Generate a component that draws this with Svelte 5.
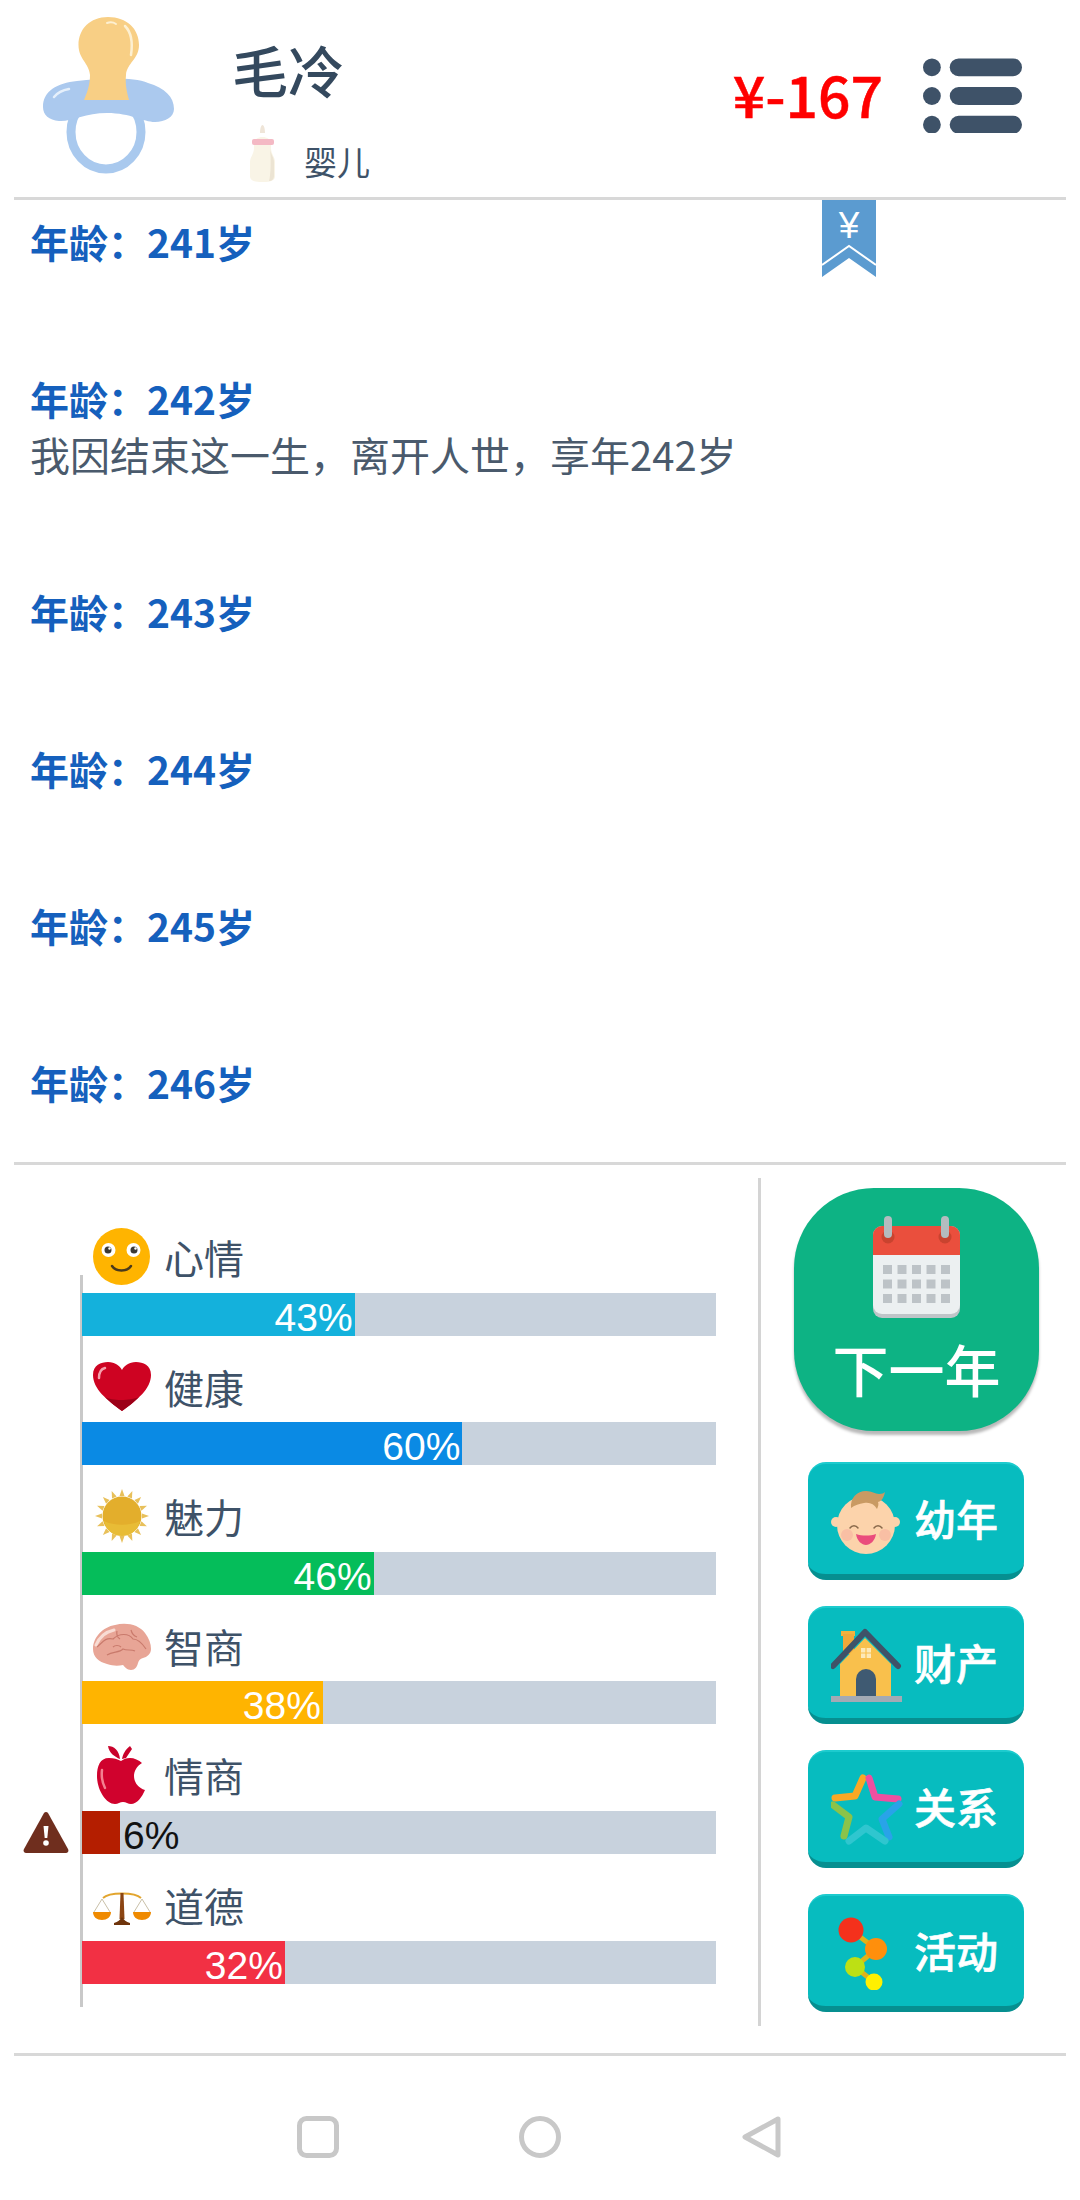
<script>
	// full-width punctuation used by the log lines
	const colon = '\uFF1A';
	const comma = '\uFF0C';

	const logs = [
		{ age: 241 },
		{ age: 242, text: `我因结束这一生${comma}离开人世${comma}享年242岁` },
		{ age: 243 },
		{ age: 244 },
		{ age: 245 },
		{ age: 246 }
	];

	const stats = [
		{ name: '心情', icon: 'face', value: 43, color: '#14b1dc' },
		{ name: '健康', icon: 'heart', value: 60, color: '#0a8ae4' },
		{ name: '魅力', icon: 'sun', value: 46, color: '#05bd5a' },
		{ name: '智商', icon: 'brain', value: 38, color: '#ffb400' },
		{ name: '情商', icon: 'apple', value: 6, color: '#b41e00' },
		{ name: '道德', icon: 'scale', value: 32, color: '#f23044' }
	];

	const actions = [
		{ name: '幼年', icon: 'baby' },
		{ name: '财产', icon: 'house' },
		{ name: '关系', icon: 'star' },
		{ name: '活动', icon: 'dots' }
	];

	const sunRays = Array.from({ length: 16 }, (_, i) => i * 22.5);
	const calendarCols = [0, 1, 2, 3, 4];
	const calendarRows = [0, 1, 2];
</script>

<div class="page">
	<header class="top">
		<svg class="pacifier" viewBox="0 0 131 157" aria-hidden="true">
			<ellipse cx="63" cy="115" rx="35" ry="37" fill="none" stroke="#a9c9ee" stroke-width="9" />
			<path d="M0 90C0 74 14 66 34 64 60 61 90 60 105 66 122 71 131 80 131 92 131 100 122 105 112 105 100 105 88 96 64 96 42 96 28 105 16 104 6 103 0 98 0 90z" fill="#abc9ee" />
			<path d="M11 80c4-5 9-7 15-8" fill="none" stroke="#e6f0fb" stroke-width="2.500" stroke-linecap="round" />
			<path d="M65 0C47 0 35.500 12 35.500 28 35.500 42 46 46 47 58 47 68 44 76 41 83L86 83C84 75 82 68 83 58 84 46 96 42 96 28 96 12 84 0 65 0z" fill="#f8cf85" />
			<path d="M82 9c6 6 8 16 6 29" fill="none" stroke="#fdf0d2" stroke-width="2.500" stroke-linecap="round" />
			<path d="M64 6c3-1 6-1 9 1" fill="none" stroke="#fdf0d2" stroke-width="2" stroke-linecap="round" />
		</svg>
		<div class="who">
			<div class="name">毛冷</div>
			<div class="stage">
				<svg class="bottle" viewBox="0 0 25 57" aria-hidden="true">
					<path d="M10 8c0-4 1-8 2.500-8s2.500 4 2.500 8z" fill="#efe5d8" />
					<path d="M4 20c0-6 4-8 8.500-8s8.500 2 8.500 8v3c0 6 4 9 4 14v14c0 4-3 6-12.500 6S0 55 0 51V37c0-5 4-8 4-14z" fill="#f9f4e6" />
					<rect x="2" y="14" width="22" height="6" rx="2" fill="#f4b9c4" />
					<path d="M20 24c1 6 4 8 4 13v14c0 3-2 5-5 5 2-6 2-24 1-32z" fill="#ece4d3" />
				</svg>
				<span>婴儿</span>
			</div>
		</div>
		<div class="money">¥-167</div>
		<svg class="menu" viewBox="0 0 100 75" aria-hidden="true">
			<circle cx="9" cy="9" r="9" />
			<circle cx="9" cy="38" r="9" />
			<circle cx="9" cy="67" r="9" />
			<rect x="27" y="0" width="73" height="18" rx="9" />
			<rect x="27" y="29" width="73" height="18" rx="9" />
			<rect x="27" y="58" width="73" height="18" rx="9" />
		</svg>
	</header>

	<section class="log">
		<svg class="ribbon" viewBox="0 0 54 77" aria-hidden="true">
			<path d="M0 0h54v77L27 58 0 77z" fill="#5b9bd0" />
			<path d="M0 65l27-19 27 19" fill="none" stroke="#fff" stroke-width="2" />
			<text x="27" y="38" text-anchor="middle">¥</text>
		</svg>
		{#each logs as entry}
			<div class="entry">
				<div class="age">年龄{colon}{entry.age}岁</div>
				{#if entry.text}
					<div class="event">{entry.text}</div>
				{/if}
			</div>
		{/each}
	</section>

	<section class="panel">
		<div class="stats">
			{#each stats as stat}
				<div class="stat">
					<div class="label">
						<svg class="stat-icon" viewBox="0 0 58 58" aria-hidden="true">
							{#if stat.icon === 'face'}
								<circle cx="28.500" cy="28.500" r="28.500" fill="#ffb400" />
								<circle cx="15.500" cy="22" r="7" fill="#fff" />
								<circle cx="40.500" cy="22" r="7" fill="#fff" />
								<circle cx="15" cy="22" r="3.500" fill="#3c3a36" />
								<circle cx="41" cy="22" r="3.500" fill="#3c3a36" />
								<circle cx="16.500" cy="20.500" r="1.200" fill="#fff" />
								<circle cx="42.500" cy="20.500" r="1.200" fill="#fff" />
								<path d="M19 38c4 6 15 6 19 0" fill="none" stroke="#4a3a1c" stroke-width="2.500" stroke-linecap="round" />
							{:else if stat.icon === 'heart'}
								<path d="M29 53C14 42 0 31 0 17 0 7 8 4 15 4c7 0 12 4 14 8 2-4 7-8 14-8 7 0 15 3 15 13 0 14-14 25-29 36z" fill="#ce0322" />
								<path d="M29 53c-6-4-12-9-17-14 6 4 26 4 34 0-5 5-11 10-17 14z" fill="#9c0018" />
								<path d="M6 20c0-5 2-9 6-10" fill="none" stroke="#f5a0ac" stroke-width="2.500" stroke-linecap="round" />
							{:else if stat.icon === 'sun'}
								{#each sunRays as angle}
									<path d="M26.500 9L29 2l2.500 7z" fill="#e8c05a" transform="rotate({angle} 29 29)" />
								{/each}
								<circle cx="29" cy="29" r="19.500" fill="#e3ae2c" />
								<path d="M11 34c2 9 9 15 18 15s16-6 18-15c-10 5-26 5-36 0z" fill="#e8bc36" />
							{:else if stat.icon === 'brain'}
								<path d="M0 32C0 20 10 10 22 8c12-3 24 0 30 8 4 5 6 11 6 16 0 5-4 8-8 9-3 1-4 2-5 5-1 4-3 7-7 7-4 0-6-3-8-5-5 1-10 1-16-1C6 45 0 40 0 32z" fill="#e8a596" />
								<path d="M4 30c5-4 8-10 16-8 6-6 16-6 20 0 5 0 9 4 13 10M14 38c6-4 12-2 16-6 4 2 8 0 12 2M24 14c-1 4 0 6 3 8M38 13c1 4 3 6 6 7M20 30c2-2 6-2 8 0" fill="none" stroke="#c97a6c" stroke-width="1.200" />
								<path d="M3 28c3-7 9-13 18-15" fill="none" stroke="#f8dcd4" stroke-width="3" stroke-linecap="round" />
							{:else if stat.icon === 'apple'}
								<path d="M28 15c-4-2-7-3-12-3C7 12 4 20 4 30c0 14 9 28 18 28 3 0 5-2 8-2s5 2 8 2c6 0 11-7 14-14-7-2-11-8-11-14 0-5 3-10 8-13-3-3-8-5-12-5-4 0-6 1-9 3z" fill="#d0022d" />
								<path d="M27 13C22 11 16 7 15 0c6 0 11 4 12 13zM29 13c1-5 3-9 8-13l2 3-6 9z" fill="#c9022b" />
								<path d="M9 24c-1 8 1 14 3 18" fill="none" stroke="#f37f90" stroke-width="2.500" stroke-linecap="round" />
							{:else}
								<path d="M10 22C16 16 42 16 48 22" fill="none" stroke="#e2a52e" stroke-width="1.800" />
								<path d="M27.500 17h3l1 26h-5z" fill="#8b4513" />
								<path d="M29 41c2 3 4 5 8 6v2H21v-2c4-1 6-3 8-6z" fill="#6e340c" />
								<path d="M9 23L1 36M9 23l8 13M49 23l-8 13M49 23l8 13" fill="none" stroke="#c9c0a8" stroke-width="1" />
								<path d="M0 36h18c0 5-4 8-9 8s-9-3-9-8zM40 36h18c0 5-4 8-9 8s-9-3-9-8z" fill="#ef8a00" />
							{/if}
						</svg>
						<span>{stat.name}</span>
					</div>
					<div class="bar">
						{#if stat.value < 10}
							<svg class="warn" viewBox="0 0 46 42" aria-hidden="true">
								<path d="M21 2a2.500 2.500 0 0 1 4 0L45 38c1 2 0 4-2 4H3c-2 0-3-2-2-4z" fill="#6f2e1e" />
								<path d="M20.500 15h5l-1.200 12h-2.600z" fill="#fff" />
								<circle cx="23" cy="32" r="2.800" fill="#fff" />
							</svg>
						{/if}
						<div class="fill" style="width: {stat.value}%; background: {stat.color}">
							{#if stat.value >= 10}<span>{stat.value}%</span>{/if}
						</div>
						{#if stat.value < 10}<span class="low">{stat.value}%</span>{/if}
					</div>
				</div>
			{/each}
		</div>

		<div class="actions">
			<div class="next">
				<svg class="calendar" viewBox="0 0 87 102" aria-hidden="true">
					<rect x="0" y="10" width="87" height="92" rx="9" fill="#bfc5c8" />
					<path d="M0 39h87v50a9 9 0 0 1-9 9H9a9 9 0 0 1-9-9z" fill="#ecf0f1" />
					<path d="M9 10h69a9 9 0 0 1 9 9v20H0V19a9 9 0 0 1 9-9z" fill="#ea4f3d" />
					<circle cx="15" cy="21" r="6.500" fill="#c9432f" />
					<circle cx="72" cy="21" r="6.500" fill="#c9432f" />
					<rect x="11" y="0" width="8" height="22" rx="4" fill="#b4bcbf" />
					<rect x="68" y="0" width="8" height="22" rx="4" fill="#b4bcbf" />
					{#each calendarRows as row}
						{#each calendarCols as col}
							<rect x={10 + col * 14.500} y={49 + row * 14.500} width="9" height="9" fill="#bdc3c7" />
						{/each}
					{/each}
				</svg>
				<span>下一年</span>
			</div>

			{#each actions as action}
				<div class="action">
					<svg class="action-icon" viewBox="0 0 72 80" aria-hidden="true">
						{#if action.icon === 'baby'}
							<circle cx="5" cy="44" r="5" fill="#fcd3ab" />
							<circle cx="64" cy="44" r="5" fill="#fcd3ab" />
							<circle cx="35" cy="47" r="29" fill="#fcd3ab" />
							<path d="M20 30c-1-10 6-17 15-17 6 0 9 3 13 3 3 0 5-1 6-2-1 5-3 9-7 10 1 2 0 5-1 7-3-5-7-7-13-6-5 1-9 2-13 5z" fill="#c99a63" />
							<circle cx="16" cy="57" r="6" fill="#f9bfa4" />
							<circle cx="54" cy="57" r="6" fill="#f9bfa4" />
							<path d="M19 50c2-3 6-3 8 0M43 50c2-3 6-3 8 0" fill="none" stroke="#8a6a4c" stroke-width="1.500" stroke-linecap="round" />
							<path d="M25 56c6 2 14 2 20 0-1 7-6 11-10 11s-9-4-10-11z" fill="#ea4c7c" />
						{:else if action.icon === 'house'}
							<rect x="10" y="9" width="14" height="5" fill="#f2b23e" />
							<rect x="12" y="12" width="11" height="20" fill="#f0a83a" />
							<path d="M9 42L34 16l26 26v32H9z" fill="#f9c04c" />
							<path d="M2 44L34 10l33 34" fill="none" stroke="#3f5268" stroke-width="6" stroke-linecap="round" stroke-linejoin="round" />
							<path d="M25 74V57a10 10 0 0 1 20 0v17z" fill="#3f5a72" />
							<rect x="30" y="26" width="10" height="10" fill="#fde9b8" />
							<path d="M35 26v10M30 31h10" stroke="#f9c04c" stroke-width="1.200" />
							<rect x="0" y="74" width="71" height="6" fill="#a3aab4" />
						{:else if action.icon === 'star'}
							<g fill="none" stroke-width="7" stroke-linecap="round" stroke-linejoin="round">
								<path d="M4 32l20-2 8-18" stroke="#f9a825" />
								<path d="M38 12l6 19 23 2" stroke="#ef4fa0" />
								<path d="M68 38L51 53l7 18" stroke="#29a3e8" />
								<path d="M54 75L35 62 18 75" stroke="#2fc6cf" />
								<path d="M13 70l5-19L2 39" stroke="#8bc34a" />
							</g>
						{:else}
							<path d="M20 20l25 19-21 18 19 15" fill="none" stroke="#e0b21a" stroke-width="5" />
							<circle cx="20" cy="20" r="12.500" fill="#f4311c" />
							<circle cx="45" cy="39" r="11" fill="#ff8f0c" />
							<circle cx="24" cy="57" r="10" fill="#bde014" />
							<circle cx="43" cy="72" r="8.500" fill="#fff000" />
						{/if}
					</svg>
					<span>{action.name}</span>
				</div>
			{/each}
		</div>
	</section>

	<footer class="nav">
		<svg viewBox="0 0 42 42" aria-hidden="true"><rect x="2.500" y="2.500" width="37" height="37" rx="7" /></svg>
		<svg viewBox="0 0 42 42" aria-hidden="true"><circle cx="21" cy="21" r="18.500" /></svg>
		<svg viewBox="0 0 42 42" aria-hidden="true"><path d="M37 3L4 21l33 18z" stroke-linejoin="round" /></svg>
	</footer>
</div>

<style>
	:global(body) {
		margin: 0;
		background: #fff;
	}

	.page {
		width: 1080px;
		height: 2200px;
		overflow: hidden;
		font-family: "Noto Sans CJK SC", "Liberation Sans", sans-serif;
		color: #3e5268;
	}

	.top {
		display: flex;
		align-items: flex-start;
		height: 197px;
		margin: 0 14px;
		border-bottom: 3px solid #d8d8d8;
	}
	.pacifier {
		flex: none;
		width: 131px;
		height: 157px;
		margin: 17px 0 0 29px;
	}
	.who {
		margin-left: 58px;
		padding-top: 27px;
	}
	.name {
		font-size: 56px;
		line-height: 84px;
		font-weight: 500;
		color: #34495e;
	}
	.stage {
		display: flex;
		align-items: flex-end;
		margin-top: 14px;
		margin-left: 17px;
		font-size: 33px;
		line-height: 42px;
		gap: 28px;
	}
	.bottle {
		width: 27px;
		height: 57px;
	}
	.money {
		margin-left: auto;
		padding-top: 51px;
		font-size: 57px;
		line-height: 84px;
		font-weight: 500;
		color: #f00;
		-webkit-text-stroke: 0.5px #f00;
	}
	.menu {
		flex: none;
		width: 99px;
		height: 75px;
		margin: 58px 44px 0 40px;
		fill: #3e5268;
	}

	.log {
		position: relative;
		height: 962px;
		padding: 13px 0 0 30px;
		box-sizing: border-box;
		overflow: hidden;
	}
	.ribbon {
		position: absolute;
		top: 0;
		left: 822px;
		width: 54px;
		height: 77px;
	}
	.ribbon text {
		font-family: "Liberation Sans", sans-serif;
		font-size: 37px;
		fill: #fff;
	}
	.entry {
		margin-bottom: 101px;
		font-size: 40px;
		line-height: 56px;
	}
	.age {
		font-size: 39px;
		font-weight: 700;
		color: #1560bd;
	}
	.event {
		color: #4a5a6c;
	}

	.panel {
		display: flex;
		height: 894px;
		margin: 0 14px;
		border-top: 3px solid #d8d8d8;
		border-bottom: 3px solid #d8d8d8;
		box-sizing: border-box;
	}
	.stats {
		position: relative;
		flex: none;
		width: 634px;
		margin-left: 68px;
		padding-top: 41px;
	}
	.stats::before {
		content: '';
		position: absolute;
		left: -2px;
		top: 110px;
		width: 3px;
		height: 732px;
		background: #c9c9c9;
	}
	.stat {
		height: 129.6px;
	}
	.label {
		display: flex;
		align-items: center;
		height: 58px;
		padding: 22px 0 6.6px 11px;
		font-size: 40px;
		line-height: 54px;
	}
	.stat-icon {
		flex: none;
		width: 58px;
		height: 58px;
		margin-right: 13px;
	}
	.bar {
		position: relative;
		display: flex;
		height: 43px;
		background: #c8d2dd;
		font-family: "Liberation Sans", sans-serif;
		font-size: 39px;
		line-height: 49px;
	}
	.fill {
		position: relative;
		height: 43px;
		padding-right: 2px;
		box-sizing: border-box;
		text-align: right;
		color: #fff;
	}
	.low {
		margin-left: 3px;
		color: #111;
	}
	.warn {
		position: absolute;
		left: -59px;
		top: 0;
		width: 46px;
		height: 42px;
	}

	.actions {
		flex: none;
		width: 308px;
		height: 848px;
		margin: 13px 0 0 42px;
		padding-left: 33px;
		box-sizing: border-box;
		border-left: 3px solid #d4d4d4;
	}
	.next {
		display: flex;
		flex-direction: column;
		align-items: center;
		width: 245px;
		height: 243px;
		margin: 10px 0 31px;
		padding-top: 28px;
		box-sizing: border-box;
		border-radius: 80px;
		background: #0db384;
		box-shadow: 0 4px 3px rgba(0, 0, 0, 0.28);
		color: #fff;
		font-size: 56px;
		line-height: 76px;
		font-weight: 500;
	}
	.calendar {
		flex: none;
		width: 87px;
		height: 102px;
		margin-bottom: 12px;
	}
	.action {
		display: flex;
		align-items: center;
		width: 216px;
		height: 118px;
		margin: 0 0 26px 14px;
		padding: 0 0 3px 23px;
		box-sizing: border-box;
		border-radius: 18px;
		border-top: 2px solid #1ccbce;
		border-bottom: 6px solid #068f90;
		background: #07bcbf;
		color: #fff;
		font-size: 42px;
		font-weight: 500;
		-webkit-text-stroke: 0.6px #fff;
	}
	.action-icon {
		flex: none;
		width: 72px;
		height: 80px;
		margin-right: 11px;
	}

	.nav {
		display: flex;
		justify-content: center;
		gap: 180px;
		padding-top: 60px;
	}
	.nav svg {
		width: 42px;
		height: 42px;
		fill: none;
		stroke: #c8c8c8;
		stroke-width: 5;
	}
</style>
